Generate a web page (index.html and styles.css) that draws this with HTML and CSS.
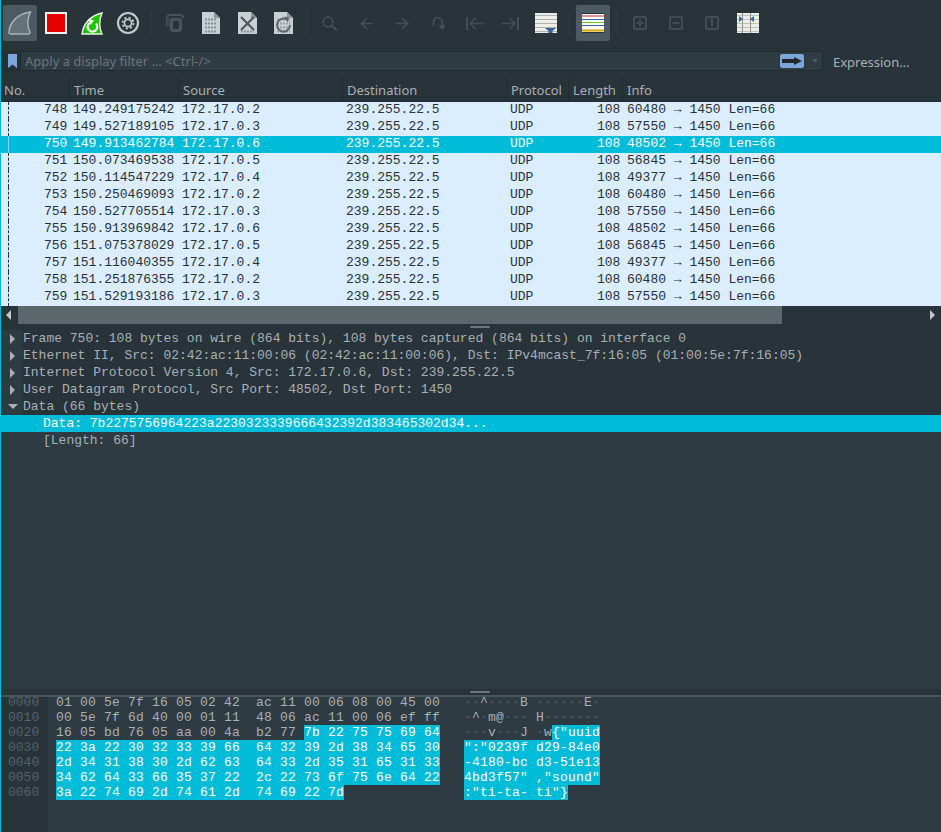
FILE: index.html
```html
<!DOCTYPE html>
<html lang="en">
<head>
<meta charset="utf-8">
<title>Wireshark</title>
<link rel="stylesheet" href="styles.css">
</head>
<body>
<div class="app">
  <div class="toolbar">
    <span class="tool active"><svg width="24" height="24" viewBox="0 0 24 24"><path d="M1 22C1 13 8 3 22.500 1 C19 8 19 15 22 21 Q22.500 23 20 23H3Q1 23 1 22Z" fill="#65727a" stroke="#a9b2b6" stroke-width="1.500"/></svg></span>
    <span class="tool"><svg width="22" height="22" viewBox="0 0 22 22"><rect x="1" y="1" width="20" height="20" fill="#e60000" stroke="#eeeeea" stroke-width="2"/></svg></span>
    <span class="tool"><svg width="22" height="23" viewBox="0 0 22 23"><path d="M1 22C2 13 8 4 21 1 C18 8 18 15 21 22Z" fill="#1fc400" stroke="#eef2ea" stroke-width="1.400"/><path d="M15 11.500a4.800 4.800 0 1 1-6.500-.5" fill="none" stroke="#fff" stroke-width="2.200"/><path d="M7.500 7l5.500 1.500-3.500 4.500z" fill="#fff"/></svg></span>
    <span class="tool"><svg width="24" height="24" viewBox="0 0 24 24"><circle cx="12" cy="12" r="10" fill="none" stroke="#c4cacc" stroke-width="2.200"/><circle cx="12" cy="12" r="3.600" fill="none" stroke="#c4cacc" stroke-width="1.800"/><circle cx="12" cy="12" r="5.500" fill="none" stroke="#c4cacc" stroke-width="1.800" stroke-dasharray="2.200 2.100"/></svg></span>
    <span class="sep"></span>
    <span class="tool"><svg width="18" height="18" viewBox="0 0 18 18"><path d="M1 12V4q0-3 3-3h10q3 0 3 3" fill="none" stroke="#475157" stroke-width="2"/><rect x="1" y="4" width="12" height="9" fill="#3a444a"/><rect x="5.500" y="5.500" width="9" height="11" rx="2" fill="#29333a" stroke="#4a545a" stroke-width="3"/></svg></span>
    <span class="tool"><svg width="18" height="22" viewBox="0 0 18 22"><path d="M0 0H12L18 6V22H0Z" fill="#c8d0d3"/><path d="M12 0V6H18Z" fill="#8d979b"/><path d="M3 7.500h12M3 11.500h12M3 15.500h12M3 19.500h12" stroke="#858f94" stroke-width="2" stroke-dasharray="2 1"/></svg></span>
    <span class="tool"><svg width="19" height="22" viewBox="0 0 19 22"><path d="M0 0H13L19 6V22H0Z" fill="#c8d0d3"/><path d="M13 0V6H19Z" fill="#8d979b"/><path d="M3 19.500h13" stroke="#858f94" stroke-width="2" stroke-dasharray="2 1"/><path d="M3 5L16 18M16 5L3 18" stroke="#4f585d" stroke-width="2.200"/></svg></span>
    <span class="tool"><svg width="19" height="22" viewBox="0 0 19 22"><path d="M0 0H13L19 6V22H0Z" fill="#c8d0d3"/><path d="M13 0V6H19Z" fill="#8d979b"/><path d="M3 7.500h13M3 11.500h13M3 15.500h13M3 19.500h13" stroke="#98a1a5" stroke-width="2" stroke-dasharray="2 1"/><path d="M13.500 8A6.500 6.500 0 1 0 16 13" fill="none" stroke="#5c666b" stroke-width="2"/><path d="M10 4.500l5 1-1 5z" fill="#5c666b"/></svg></span>
    <span class="sep"></span>
    <span class="tool"><svg width="16" height="15" viewBox="0 0 16 15"><circle cx="6" cy="6" r="4.800" fill="none" stroke="#454e53" stroke-width="1.800"/><path d="M9.500 9.500l5.500 5" stroke="#454e53" stroke-width="2.200"/></svg></span>
    <span class="tool"><svg width="13" height="13" viewBox="0 0 13 13"><path d="M13 6.500H1.500M7 1L1.500 6.500 7 12" fill="none" stroke="#454e53" stroke-width="1.700"/></svg></span>
    <span class="tool"><svg width="13" height="13" viewBox="0 0 13 13"><path d="M0 6.500h11.500M6 1l5.500 5.500L6 12" fill="none" stroke="#454e53" stroke-width="1.700"/></svg></span>
    <span class="tool"><svg width="13" height="13" viewBox="0 0 13 13"><path d="M1.500 8.500V5a4.300 4.300 0 0 1 8.600 0v4" fill="none" stroke="#454e53" stroke-width="1.800"/><path d="M6.500 8h7.500l-3.800 5z" fill="#454e53"/></svg></span>
    <span class="tool"><svg width="17" height="13" viewBox="0 0 17 13"><path d="M1 0v13" stroke="#454e53" stroke-width="2"/><path d="M17 6.500H4M9.500 1L4 6.500 9.500 12" fill="none" stroke="#454e53" stroke-width="1.700"/></svg></span>
    <span class="tool"><svg width="17" height="13" viewBox="0 0 17 13"><path d="M16 0v13" stroke="#454e53" stroke-width="2"/><path d="M0 6.500h13M7.500 1L13 6.500 7.500 12" fill="none" stroke="#454e53" stroke-width="1.700"/></svg></span>
    <span class="tool"><svg width="22" height="20" viewBox="0 0 22 20"><rect width="22" height="20" fill="#eeeee8"/><path d="M0 2.500h22M0 6.500h22M0 10.500h22M0 14.500h22M0 18.500h22" stroke="#b0b3aa"/><path d="M10 15h11l-3.500 3V20h-4v-2z" fill="#3465a4"/></svg></span>
    <span class="sep"></span>
    <span class="tool active"><svg width="22" height="20" viewBox="0 0 22 20"><rect width="22" height="20" fill="#fbfbf6"/><path d="M0 .5h22M0 19.500h22" stroke="#2b3338"/><path d="M0 3h22" stroke="#cc2b2b"/><path d="M0 6.500h22" stroke="#3465a4"/><path d="M0 9.500h22" stroke="#73c216"/><path d="M0 12.500h22" stroke="#3465a4"/><path d="M0 17.500h22" stroke="#dba400" stroke-width="2"/></svg></span>
    <span class="sep"></span>
    <span class="tool"><svg width="14" height="14" viewBox="0 0 14 14"><rect x="1" y="1" width="12" height="12" rx="1" fill="none" stroke="#434c51" stroke-width="2"/><path d="M7 3.500v7M3.500 7h7" stroke="#434c51" stroke-width="2"/></svg></span>
    <span class="tool"><svg width="14" height="14" viewBox="0 0 14 14"><rect x="1" y="1" width="12" height="12" rx="1" fill="none" stroke="#434c51" stroke-width="2"/><path d="M3.500 7h7" stroke="#434c51" stroke-width="2"/></svg></span>
    <span class="tool"><svg width="14" height="14" viewBox="0 0 14 14"><rect x="1" y="1" width="12" height="12" rx="1" fill="none" stroke="#434c51" stroke-width="2"/><path d="M5 4.500l2-1.200v7.500" fill="none" stroke="#434c51" stroke-width="2"/></svg></span>
    <span class="tool"><svg width="22" height="20" viewBox="0 0 22 20"><rect width="22" height="20" fill="#eeeee8"/><path d="M0 2.500h22M0 6.500h22M0 10.500h22M0 14.500h22M0 18.500h22" stroke="#c0c2ba"/><path d="M5.500 0v20M13.500 0v20" stroke="#8f9490"/><path d="M2 3l4 3-4 3zM17 3l-4 3 4 3z" fill="#3465a4"/></svg></span>
  </div>
  <div class="filterbar">
    <div class="filter">
      <span class="bookmark"><svg width="9" height="14" viewBox="0 0 9 14"><path d="M0 0H9V14L4.500 10.500 0 14Z" fill="#7aa6da"/></svg></span>
      <span class="placeholder">Apply a display filter … &lt;Ctrl-/&gt;</span>
      <span class="apply"><svg width="20" height="8" viewBox="0 0 20 8"><path d="M0 2H12V0L20 4 12 8V6H0Z" fill="#22282c"/></svg></span>
      <span class="drop"></span>
    </div>
    <span class="expr">Expression…</span>
  </div>
  <div class="listhead">
    <span class="c-no">No.</span><span class="c-time">Time</span><span class="c-src">Source</span><span class="c-dst">Destination</span><span class="c-proto">Protocol</span><span class="c-len">Length</span><span class="c-info">Info</span>
  </div>
  <div class="list">
    <div class="row"><span class="mark first"></span><span class="no">748</span><span class="time">149.249175242</span><span class="src">172.17.0.2</span><span class="dst">239.255.22.5</span><span class="proto">UDP</span><span class="len">108</span><span class="info">60480 → 1450 Len=66</span></div>
    <div class="row"><span class="mark"></span><span class="no">749</span><span class="time">149.527189105</span><span class="src">172.17.0.3</span><span class="dst">239.255.22.5</span><span class="proto">UDP</span><span class="len">108</span><span class="info">57550 → 1450 Len=66</span></div>
    <div class="row sel"><span class="mark"></span><span class="no">750</span><span class="time">149.913462784</span><span class="src">172.17.0.6</span><span class="dst">239.255.22.5</span><span class="proto">UDP</span><span class="len">108</span><span class="info">48502 → 1450 Len=66</span></div>
    <div class="row"><span class="mark"></span><span class="no">751</span><span class="time">150.073469538</span><span class="src">172.17.0.5</span><span class="dst">239.255.22.5</span><span class="proto">UDP</span><span class="len">108</span><span class="info">56845 → 1450 Len=66</span></div>
    <div class="row"><span class="mark"></span><span class="no">752</span><span class="time">150.114547229</span><span class="src">172.17.0.4</span><span class="dst">239.255.22.5</span><span class="proto">UDP</span><span class="len">108</span><span class="info">49377 → 1450 Len=66</span></div>
    <div class="row"><span class="mark"></span><span class="no">753</span><span class="time">150.250469093</span><span class="src">172.17.0.2</span><span class="dst">239.255.22.5</span><span class="proto">UDP</span><span class="len">108</span><span class="info">60480 → 1450 Len=66</span></div>
    <div class="row"><span class="mark"></span><span class="no">754</span><span class="time">150.527705514</span><span class="src">172.17.0.3</span><span class="dst">239.255.22.5</span><span class="proto">UDP</span><span class="len">108</span><span class="info">57550 → 1450 Len=66</span></div>
    <div class="row"><span class="mark"></span><span class="no">755</span><span class="time">150.913969842</span><span class="src">172.17.0.6</span><span class="dst">239.255.22.5</span><span class="proto">UDP</span><span class="len">108</span><span class="info">48502 → 1450 Len=66</span></div>
    <div class="row"><span class="mark"></span><span class="no">756</span><span class="time">151.075378029</span><span class="src">172.17.0.5</span><span class="dst">239.255.22.5</span><span class="proto">UDP</span><span class="len">108</span><span class="info">56845 → 1450 Len=66</span></div>
    <div class="row"><span class="mark"></span><span class="no">757</span><span class="time">151.116040355</span><span class="src">172.17.0.4</span><span class="dst">239.255.22.5</span><span class="proto">UDP</span><span class="len">108</span><span class="info">49377 → 1450 Len=66</span></div>
    <div class="row"><span class="mark"></span><span class="no">758</span><span class="time">151.251876355</span><span class="src">172.17.0.2</span><span class="dst">239.255.22.5</span><span class="proto">UDP</span><span class="len">108</span><span class="info">60480 → 1450 Len=66</span></div>
    <div class="row"><span class="mark"></span><span class="no">759</span><span class="time">151.529193186</span><span class="src">172.17.0.3</span><span class="dst">239.255.22.5</span><span class="proto">UDP</span><span class="len">108</span><span class="info">57550 → 1450 Len=66</span></div>
  </div>
  <div class="hscroll">
    <span class="arrow left"></span>
    <span class="thumb"></span>
    <span class="arrow right"></span>
  </div>
  <div class="grip top"><span></span></div>
  <div class="details">
    <div class="node"><span class="tw closed"></span><span class="tx">Frame 750: 108 bytes on wire (864 bits), 108 bytes captured (864 bits) on interface 0</span></div>
    <div class="node"><span class="tw closed"></span><span class="tx">Ethernet II, Src: 02:42:ac:11:00:06 (02:42:ac:11:00:06), Dst: IPv4mcast_7f:16:05 (01:00:5e:7f:16:05)</span></div>
    <div class="node"><span class="tw closed"></span><span class="tx">Internet Protocol Version 4, Src: 172.17.0.6, Dst: 239.255.22.5</span></div>
    <div class="node"><span class="tw closed"></span><span class="tx">User Datagram Protocol, Src Port: 48502, Dst Port: 1450</span></div>
    <div class="node"><span class="tw open"></span><span class="tx">Data (66 bytes)</span></div>
    <div class="node child sel"><span class="tx">Data: 7b2275756964223a2230323339666432392d383465302d34...</span></div>
    <div class="node child alt"><span class="tx">[Length: 66]</span></div>
  </div>
  <div class="grip bottom"><span></span></div>
  <div class="hex">
    <div class="offsets"><div>0000</div><div>0010</div><div>0020</div><div>0030</div><div>0040</div><div>0050</div><div>0060</div></div>
    <div class="bytes">
      <div class="hl"><span>01 00 5e 7f 16 05 02 42  ac 11 00 06 08 00 45 00</span><span class="asc"><i>··</i>^<i>····</i>B <i>······</i>E<i>·</i></span></div>
      <div class="hl"><span>00 5e 7f 6d 40 00 01 11  48 06 ac 11 00 06 ef ff</span><span class="asc"><i>·</i>^<i>·</i>m@<i>···</i> H<i>·······</i></span></div>
      <div class="hl"><span>16 05 bd 76 05 aa 00 4a  b2 77 <b>7b 22 75 75 69 64</b></span><span class="asc"><i>···</i>v<i>···</i>J <i>·</i>w<b>{"uuid</b></span></div>
      <div class="hl"><span><b>22 3a 22 30 32 33 39 66  64 32 39 2d 38 34 65 30</b></span><span class="asc"><b>":"0239f d29-84e0</b></span></div>
      <div class="hl"><span><b>2d 34 31 38 30 2d 62 63  64 33 2d 35 31 65 31 33</b></span><span class="asc"><b>-4180-bc d3-51e13</b></span></div>
      <div class="hl"><span><b>34 62 64 33 66 35 37 22  2c 22 73 6f 75 6e 64 22</b></span><span class="asc"><b>4bd3f57" ,"sound"</b></span></div>
      <div class="hl"><span><b>3a 22 74 69 2d 74 61 2d  74 69 22 7d</b></span><span class="asc"><b>:"ti-ta- ti"}</b></span></div>
    </div>
  </div>
</div>
</body>
</html>
```
FILE: styles.css
```css
* { box-sizing: border-box; }
html, body { margin: 0; padding: 0; background: #2f3b43; }
.app {
  width: 941px; height: 832px; overflow: hidden;
  display: flex; flex-direction: column;
  border-left: 1px solid #00bcd4;
  background: #2a343b;
  font-family: "Noto Sans", sans-serif;
  color: #a7b0b4;
}
.toolbar {
  height: 46px; flex: none; display: flex; align-items: center;
  padding: 0 0 0 1px; background: #29333a;
}
.tool {
  width: 34px; height: 36px; margin: 0 1px; flex: none; border-radius: 2px;
  display: flex; align-items: center; justify-content: center;
}
.tool.active { background: #4d5a61; }
.sep { width: 1px; height: 26px; margin: 0 5px; background: #2f3940; flex: none; }
.filterbar {
  height: 32px; flex: none; display: flex; align-items: flex-start;
  padding: 5px 0 0 2px; background: #29333a;
}
.filter {
  width: 820px; height: 20px; display: flex; align-items: center; border-radius: 3px;
  background: #2f3c44; border: 1px solid #212a30;
}
.bookmark { width: 17px; height: 100%; display: flex; align-items: center; justify-content: center; border-right: 1px solid #212a30; background: #27313a; }
.placeholder { flex: 1; padding-left: 4px; font-size: 13px; color: #6c767b; white-space: nowrap; }
.apply { width: 24px; height: 14px; background: #7aa6da; border-radius: 2px; display: flex; align-items: center; justify-content: center; }
.drop { width: 18px; height: 100%; position: relative; }
.drop::after { content: ""; position: absolute; left: 8px; top: 7px; border: 3.500px solid transparent; border-top: 4px solid #4f5a60; }
.expr { padding-left: 10px; font-size: 13px; line-height: 22px; color: #a7b0b4; }
.listhead {
  height: 24px; flex: none; display: flex; font-size: 13px;
  color: #a7b0b4; background: #29333a; border-bottom: 1px solid #222b31;
}
.listhead span { line-height: 24px; padding-left: 4px; border-right: 1px solid #222b31; flex: none; }
.c-no { width: 69px; padding-left: 3px !important; }
.c-time { width: 109px; }
.c-src { width: 164px; }
.c-dst { width: 164px; }
.c-proto { width: 62px; }
.c-len { width: 54px; }
.c-info { flex: 1 !important; border-right: 0 !important; }
.list { flex: none; height: 204px; }
.row {
  height: 17px; display: flex; background: #daeeff; color: #2a3136;
  font: 13px/15px "Liberation Mono", monospace; white-space: nowrap;
}
.row.sel { background: #00bcd9; color: #fff; }
.mark { width: 43px; flex: none; position: relative; }
.mark::after { content: ""; position: absolute; left: 7px; top: 0; bottom: 0; border-left: 1px dashed #2a3136; }
.row.sel .mark::after { border-left: 1px solid #7fdcec; }
.no { width: 29px; flex: none; }
.time { width: 109px; flex: none; }
.src { width: 164px; flex: none; }
.dst { width: 164px; flex: none; }
.proto { width: 62px; flex: none; }
.len { width: 52px; flex: none; padding-left: 25px; }
.info { flex: 1; padding-left: 3px; }
.hscroll { height: 18px; flex: none; display: flex; justify-content: space-between; background: #29333a; }
.arrow { width: 17px; flex: none; position: relative; }
.arrow.left::after { content: ""; position: absolute; left: 5px; top: 4px; border: 5px solid transparent; border-left: 0; border-right: 5px solid #c1c7ca; }
.arrow.right::after { content: ""; position: absolute; left: 6px; top: 4px; border: 5px solid transparent; border-right: 0; border-left: 5px solid #c1c7ca; }
.thumb { width: 764px; margin-right: auto; background: #5c676c; flex: none; }
.grip { flex: none; display: flex; justify-content: center; background: #29333a; }
.grip span { width: 20px; height: 2px; border-radius: 1px; background: #6c767b; margin-left: 17px; }
.grip.top { height: 6px; align-items: center; }
.details { flex: none; height: 359px; background: #2f3b43; font: 13px/15px "Liberation Mono", monospace; color: #a7b0b4; }
.node { height: 17px; display: flex; align-items: center; white-space: nowrap; background: #29333a; }
.tw { width: 21px; flex: none; height: 17px; position: relative; background: #2f3b43; margin-right: 1px; }
.tw.closed::after { content: ""; position: absolute; left: 9px; top: 4px; border: 5px solid transparent; border-right: 0; border-left: 5px solid #a7b0b4; }
.tw.open::after { content: ""; position: absolute; left: 7px; top: 6px; border: 5px solid transparent; border-bottom: 0; border-top: 5px solid #a7b0b4; }
.node.child { padding-left: 42px; }
.node.sel { background: #00bcd9; color: #fff; }
.node.alt { background: #2f3b43; }
.grip.bottom { height: 6px; align-items: center; }
.hex {
  flex: 1; display: flex;
  background: linear-gradient(#4a555b 2px, transparent 2px), #2f3b43;
  font: 13px/15px "Liberation Mono", monospace;
}
.offsets {
  width: 47px; flex: none; padding-left: 7px; color: #566168;
  background: linear-gradient(#4a555b 2px, #29333a 2px);
}
.bytes { padding-left: 8px; letter-spacing: .2px; color: #a7b0b4; }
.hl { height: 15px; display: flex; white-space: pre; }
.hl > span:first-child { width: 408px; flex: none; }
.asc { width: 136px; flex: none; }
.hl b { font-weight: 400; background: #00bcd9; color: #fff; }
.hl i { font-style: normal; color: #566168; }
```
